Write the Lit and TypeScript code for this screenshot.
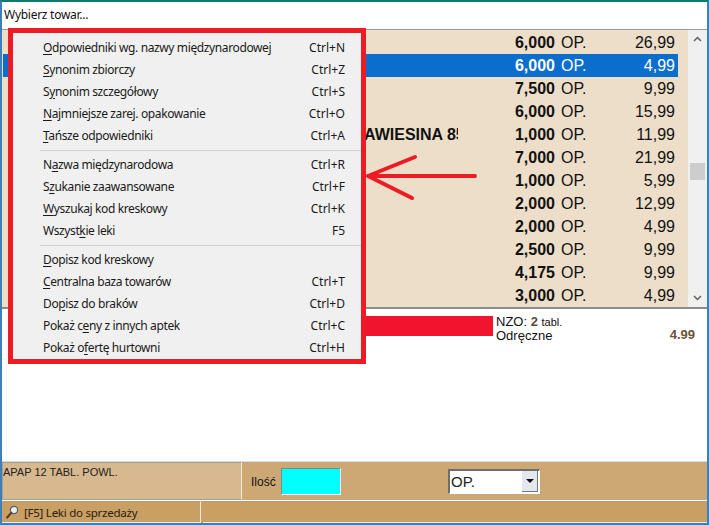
import { LitElement, html, css } from "lit";
import { customElement } from "lit/decorators.js";

// label before / underlined letter / label after, shortcut
type Item = [string, string, string, string];

const groups: Item[][] = [
  [
    ["", "O", "dpowiedniki wg. nazwy międzynarodowej", "Ctrl+N"],
    ["", "S", "ynonim zbiorczy", "Ctrl+Z"],
    ["S", "y", "nonim szczegółowy", "Ctrl+S"],
    ["", "N", "ajmniejsze zarej. opakowanie", "Ctrl+O"],
    ["", "T", "ańsze odpowiedniki", "Ctrl+A"],
  ],
  [
    ["N", "a", "zwa międzynarodowa", "Ctrl+R"],
    ["S", "z", "ukanie zaawansowane", "Ctrl+F"],
    ["", "W", "yszukaj kod kreskowy", "Ctrl+K"],
    ["Wszyst", "k", "ie leki", "F5"],
  ],
  [
    ["", "D", "opisz kod kreskowy", ""],
    ["", "C", "entralna baza towarów", "Ctrl+T"],
    ["Do", "p", "isz do braków", "Ctrl+D"],
    ["Pokaż c", "e", "ny z innych aptek", "Ctrl+C"],
    ["Pokaż o", "f", "ertę hurtowni", "Ctrl+H"],
  ],
];

const rows = [
  ["", "6,000", "26,99"],
  ["", "6,000", "4,99"],
  ["", "7,500", "9,99"],
  ["", "6,000", "15,99"],
  ["AWIESINA 85", "1,000", "11,99"],
  ["", "7,000", "21,99"],
  ["", "1,000", "5,99"],
  ["", "2,000", "12,99"],
  ["", "2,000", "4,99"],
  ["", "2,500", "9,99"],
  ["", "4,175", "9,99"],
  ["", "3,000", "4,99"],
];

@customElement("app-root")
export class AppRoot extends LitElement {
  static styles = css`
    :host {
      display: block;
      position: relative;
      width: 709px;
      height: 525px;
      overflow: hidden;
      background: #fff;
    }
    .window {
      box-sizing: border-box;
      width: 709px;
      height: 525px;
      display: flex;
      flex-direction: column;
      border: 2px solid #3d7fb8;
      border-top-color: #0e7a6c;
      background: #fff;
      font-family: "Liberation Sans", Arial, sans-serif;
      color: #111;
    }
    .title {
      height: 27px;
      flex: none;
      padding: 5px 0 0 2px;
      box-sizing: border-box;
      font: 12px/16px "Noto Sans", sans-serif;
      letter-spacing: -0.27px;
    }
    .grid {
      height: 280px;
      flex: none;
      display: flex;
      background: #ecdec9;
      border-top: 1px solid #9a9a9a;
      border-bottom: 2px solid #8c8c8c;
      box-sizing: border-box;
    }
    .list {
      flex: 1;
      padding: 1px 0 0 1px;
    }
    .row {
      width: 675px;
      height: 23px;
      display: flex;
      align-items: center;
      font-size: 16px;
      box-sizing: border-box;
    }
    .row.sel {
      background: #0b6ecd;
      color: #fff;
    }
    .name {
      width: 455px;
      box-sizing: border-box;
      padding-left: 361px;
      overflow: hidden;
      white-space: nowrap;
      font-weight: bold;
    }
    .qty {
      width: 97px;
      text-align: right;
      font-weight: bold;
    }
    .unit {
      width: 60px;
      margin-left: 6px;
    }
    .price {
      width: 54px;
      text-align: right;
    }
    .scroll {
      width: 19px;
      flex: none;
      background: #f0f0f0;
      display: flex;
      flex-direction: column;
      align-items: center;
      justify-content: space-between;
      padding: 6px 0;
      box-sizing: border-box;
    }
    .thumb {
      width: 15px;
      height: 17px;
      background: #cdcdcd;
      margin-top: 116px;
      margin-bottom: 110px;
    }
    .scroll svg {
      display: block;
    }
    .detail {
      flex: 1;
      display: flex;
      padding: 6px 12px 0 364px;
      align-items: flex-start;
      box-sizing: border-box;
    }
    .bar {
      width: 127px;
      height: 20px;
      flex: none;
      background: #f0142f;
      margin-top: 1px;
    }
    .info {
      margin-left: 3px;
      font-size: 13px;
      line-height: 13px;
      flex: 1;
    }
    .info b {
      color: #5a4a3c;
      font-size: 13px;
    }
    .info small {
      font-size: 11px;
    }
    .total {
      align-self: flex-start;
      margin-top: 13px;
      font-size: 13px;
      line-height: 14px;
      font-weight: bold;
      color: #6b5238;
    }
    .order {
      height: 40px;
      flex: none;
      display: flex;
      border-top: 1px solid #cfdde6;
      border-bottom: 1px solid #fff;
      box-sizing: border-box;
      background: #cda874;
    }
    .product {
      width: 240px;
      flex: none;
      box-sizing: border-box;
      background: #d8b88f;
      border: 1px solid #a9a08c;
      border-right: 1px solid #f3ead9;
      padding: 2px 0 0 0;
      font-size: 11px;
      line-height: 14px;
      color: #222;
    }
    .qty-label {
      margin: 0 0 0 9px;
      align-self: center;
      font-size: 12px;
      width: 30px;
      padding-top: 1px;
    }
    .qty-input {
      width: 60px;
      height: 27px;
      align-self: center;
      box-sizing: border-box;
      background: #00ffff;
      border: 1px solid #fff;
      border-top-color: #6f8f8f;
      border-left-color: #6f8f8f;
    }
    .select {
      margin-left: 107px;
      align-self: center;
      width: 92px;
      height: 25px;
      box-sizing: border-box;
      display: flex;
      background: #fff;
      border: 1px solid #fff;
      border-top: 2px solid #6e6e6e;
      border-left: 2px solid #6e6e6e;
      font-size: 15px;
      color: #222;
    }
    .select span {
      flex: 1;
      line-height: 21px;
      padding-left: 1px;
    }
    .arrow {
      width: 16px;
      margin: 0 1px 1px 0;
      background: #e4e8ee;
      border-right: 1px solid #777;
      border-bottom: 1px solid #777;
      box-sizing: border-box;
      display: flex;
      align-items: center;
      justify-content: center;
    }
    .status {
      height: 22px;
      flex: none;
      display: flex;
      background: #c99f63;
      gap: 2px;
    }
    .status-cell {
      box-sizing: border-box;
      border-top: 1px solid #b49a76;
      border-right: 1px solid #f3ead9;
      border-bottom: 1px solid #f3ead9;
      display: flex;
      align-items: center;
      gap: 5px;
      font: 11.5px "Noto Sans", sans-serif;
      letter-spacing: -0.25px;
      color: #2a2015;
      padding-left: 4px;
    }
    .status-cell.left {
      width: 199px;
    }
    .status-cell.right {
      flex: 1;
      border-right: none;
    }

    /* the context menu and its markup lie over the list */
    .menu {
      position: absolute;
      left: 8px;
      top: 28px;
      width: 358px;
      height: 336px;
      box-sizing: border-box;
      border: 5px solid #ed1c24;
      background: #f0f0f0;
      font: 12px "Noto Sans", sans-serif;
      color: #1a1a1a;
      padding-top: 3px;
    }
    .item {
      height: 22px;
      display: flex;
      align-items: center;
      justify-content: space-between;
      padding: 0 16px 0 30px;
      white-space: nowrap;
    }
    .item span:first-child {
      letter-spacing: -0.38px;
    }
    .sep {
      height: 1px;
      background: #d2d2d2;
      margin: 4px 0 2px 27px;
    }
    .mark {
      position: absolute;
      left: 362px;
      top: 140px;
    }
    u {
      text-underline-offset: 2px;
    }
  `;

  render() {
    return html`
      <div class="window">
        <div class="title">Wybierz towar...</div>
        <div class="grid">
          <div class="list">
            ${rows.map(
              (r, i) => html`
                <div class="row ${i === 1 ? "sel" : ""}">
                  <div class="name">${r[0]}</div>
                  <div class="qty">${r[1]}</div>
                  <div class="unit">OP.</div>
                  <div class="price">${r[2]}</div>
                </div>
              `
            )}
          </div>
          <div class="scroll">
            <svg width="9" height="6" viewBox="0 0 9 6">
              <path d="M1 5l3.5-3.5L8 5" fill="none" stroke="#606060" stroke-width="1.5" />
            </svg>
            <div class="thumb"></div>
            <svg width="9" height="6" viewBox="0 0 9 6">
              <path d="M1 1l3.5 3.5L8 1" fill="none" stroke="#606060" stroke-width="1.5" />
            </svg>
          </div>
        </div>
        <div class="detail">
          <div class="bar"></div>
          <div class="info">
            NZO: <b>2</b> <small>tabl.</small><br />
            Odręczne
          </div>
          <div class="total">4.99</div>
        </div>
        <div class="order">
          <div class="product">APAP 12 TABL. POWL.</div>
          <div class="qty-label">Ilość</div>
          <div class="qty-input"></div>
          <div class="select">
            <span>OP.</span>
            <div class="arrow">
              <svg width="8" height="4" viewBox="0 0 8 4"><path d="M0 0h8L4 4z" fill="#111" /></svg>
            </div>
          </div>
        </div>
        <div class="status">
          <div class="status-cell left">
            <svg width="13" height="14" viewBox="0 0 13 14">
              <circle cx="8" cy="5" r="3.6" fill="#e8eef2" stroke="#55616a" stroke-width="1.2" />
              <path d="M5.2 7.8L1.2 12.5" stroke="#4a3a28" stroke-width="2" stroke-linecap="round" />
            </svg>
            [F5] Leki do sprzedaży
          </div>
          <div class="status-cell right"></div>
        </div>
      </div>

      <div class="menu">
        ${groups.map(
          (g, i) => html`
            ${i > 0 ? html`<div class="sep"></div>` : ""}
            ${g.map(
              (it) => html`
                <div class="item">
                  <span>${it[0]}<u>${it[1]}</u>${it[2]}</span>
                  <span>${it[3]}</span>
                </div>
              `
            )}
          `
        )}
      </div>

      <svg class="mark" width="120" height="76" viewBox="0 0 120 76">
        <path
          d="M6 36H113M6 36L53 17M6 36L50 58"
          fill="none"
          stroke="#ed1c24"
          stroke-width="4"
          stroke-linecap="round"
        />
      </svg>
    `;
  }
}
